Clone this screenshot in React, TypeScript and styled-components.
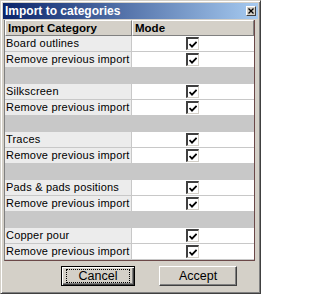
import React from "react";
import styled, { createGlobalStyle } from "styled-components";

const Global = createGlobalStyle`
  html, body { margin: 0; padding: 0; background: #ffffff; }
  body { font-family: "Liberation Sans", Arial, sans-serif; }
`;

const Window = styled.div`
  box-sizing: border-box;
  width: 261px;
  height: 294px;
  background: #d4d0c8;
  border: 1px solid;
  border-color: #d4d0c8 #404040 #404040 #d4d0c8;
  box-shadow: inset 1px 1px 0 #ffffff, inset -1px -1px 0 #808080;
  padding: 2px;
  display: flex;
  flex-direction: column;
`;

const TitleBar = styled.div`
  height: 16px;
  display: flex;
  align-items: center;
  justify-content: space-between;
  padding: 0 2px 0 2px;
  background: linear-gradient(to right, #0a246a, #a6caf0);
  color: #ffffff;
  font-weight: bold;
  font-size: 12px;
`;

const CloseButton = styled.div`
  box-sizing: border-box;
  width: 10px;
  height: 10px;
  background: #d4d0c8;
  border: 1px solid;
  border-color: #ffffff #404040 #404040 #ffffff;
  display: flex;
  align-items: center;
  justify-content: center;
`;

const Grid = styled.div`
  margin: 1px 3px 0 1px;
  display: grid;
  grid-template-columns: 127px 1fr;
  grid-auto-rows: 16px;
  border-right: 1px solid #6b4848;
  border-bottom: 1px solid #6b4848;
  border-left: 1px solid #808080;
  background: #ffffff;
`;

const HeaderCell = styled.div`
  box-sizing: border-box;
  height: 16px;
  background: #d4d0c8;
  border: 1px solid;
  border-color: #ffffff #808080 #808080 #ffffff;
  font-weight: bold;
  font-size: 11.5px;
  line-height: 14px;
  padding-left: 2px;
  color: #000;
`;

const NameCell = styled.div`
  box-sizing: border-box;
  background: #ececec;
  border-bottom: 1px solid #c8c8c8;
  border-right: 1px solid #c8c8c8;
  font-size: 11px;
  letter-spacing: 0.2px;
  line-height: 15px;
  padding-left: 1px;
  color: #000;
  white-space: nowrap;
`;

const ModeCell = styled.div`
  box-sizing: border-box;
  background: #ffffff;
  border-bottom: 1px solid #c8c8c8;
  display: flex;
  align-items: center;
  justify-content: center;
  padding-right: 1px;
`;

const SeparatorRow = styled.div`
  grid-column: 1 / span 2;
  background: #c8c8c8;
`;

const Check = styled.div`
  box-sizing: border-box;
  width: 13px;
  height: 13px;
  background: #ffffff;
  border-top: 2px solid #404040;
  border-left: 2px solid #404040;
  border-right: 1px solid #d4d0c8;
  border-bottom: 1px solid #d4d0c8;
  display: flex;
  align-items: center;
  justify-content: center;
`;

const ButtonRow = styled.div`
  display: flex;
  gap: 24px;
  padding-left: 58px;
  margin-top: 5px;
`;

const Button = styled.button<{ $default?: boolean }>`
  box-sizing: border-box;
  width: ${(p) => (p.$default ? "74px" : "78px")};
  height: 20px;
  background: #d4d0c8;
  font-family: "Liberation Sans", Arial, sans-serif;
  font-size: 12.5px;
  color: #000;
  padding: 0;
  border: 1px solid;
  border-color: ${(p) => (p.$default ? "#000" : "#ffffff #404040 #404040 #ffffff")};
  box-shadow: ${(p) =>
    p.$default
      ? "inset 1px 1px 0 #ffffff, inset -1px -1px 0 #404040, inset -2px -2px 0 #808080"
      : "inset -1px -1px 0 #808080"};
  display: flex;
  align-items: center;
  justify-content: center;
`;

const Focus = styled.span`
  box-sizing: border-box;
  width: 64px;
  height: 14px;
  border: 1px dotted #000;
  display: flex;
  align-items: center;
  justify-content: center;
  line-height: 12px;
`;

const CheckMark = () => (
  <svg width="8" height="7" viewBox="0 0 8 7">
    <path d="M0.5 3 L3 5.6 L7.6 0.8" stroke="#000" strokeWidth="1.8" fill="none" />
  </svg>
);

const groups = [
  "Board outlines",
  "Silkscreen",
  "Traces",
  "Pads & pads positions",
  "Copper pour",
];

export default function App() {
  return (
    <>
      <Global />
      <Window>
        <TitleBar>
          <span>Import to categories</span>
          <CloseButton>
            <svg width="6" height="6" viewBox="0 0 6 6">
              <path d="M0.5 0.5 L5.5 5.5 M5.5 0.5 L0.5 5.5" stroke="#000" strokeWidth="1.3" />
            </svg>
          </CloseButton>
        </TitleBar>
        <Grid>
          <HeaderCell>Import Category</HeaderCell>
          <HeaderCell>Mode</HeaderCell>
          {groups.map((g, i) => (
            <React.Fragment key={g}>
              <NameCell>{g}</NameCell>
              <ModeCell>
                <Check>
                  <CheckMark />
                </Check>
              </ModeCell>
              <NameCell>Remove previous import</NameCell>
              <ModeCell>
                <Check>
                  <CheckMark />
                </Check>
              </ModeCell>
              {i < groups.length - 1 && <SeparatorRow />}
            </React.Fragment>
          ))}
        </Grid>
        <ButtonRow>
          <Button $default>
            <Focus>Cancel</Focus>
          </Button>
          <Button>Accept</Button>
        </ButtonRow>
      </Window>
    </>
  );
}
